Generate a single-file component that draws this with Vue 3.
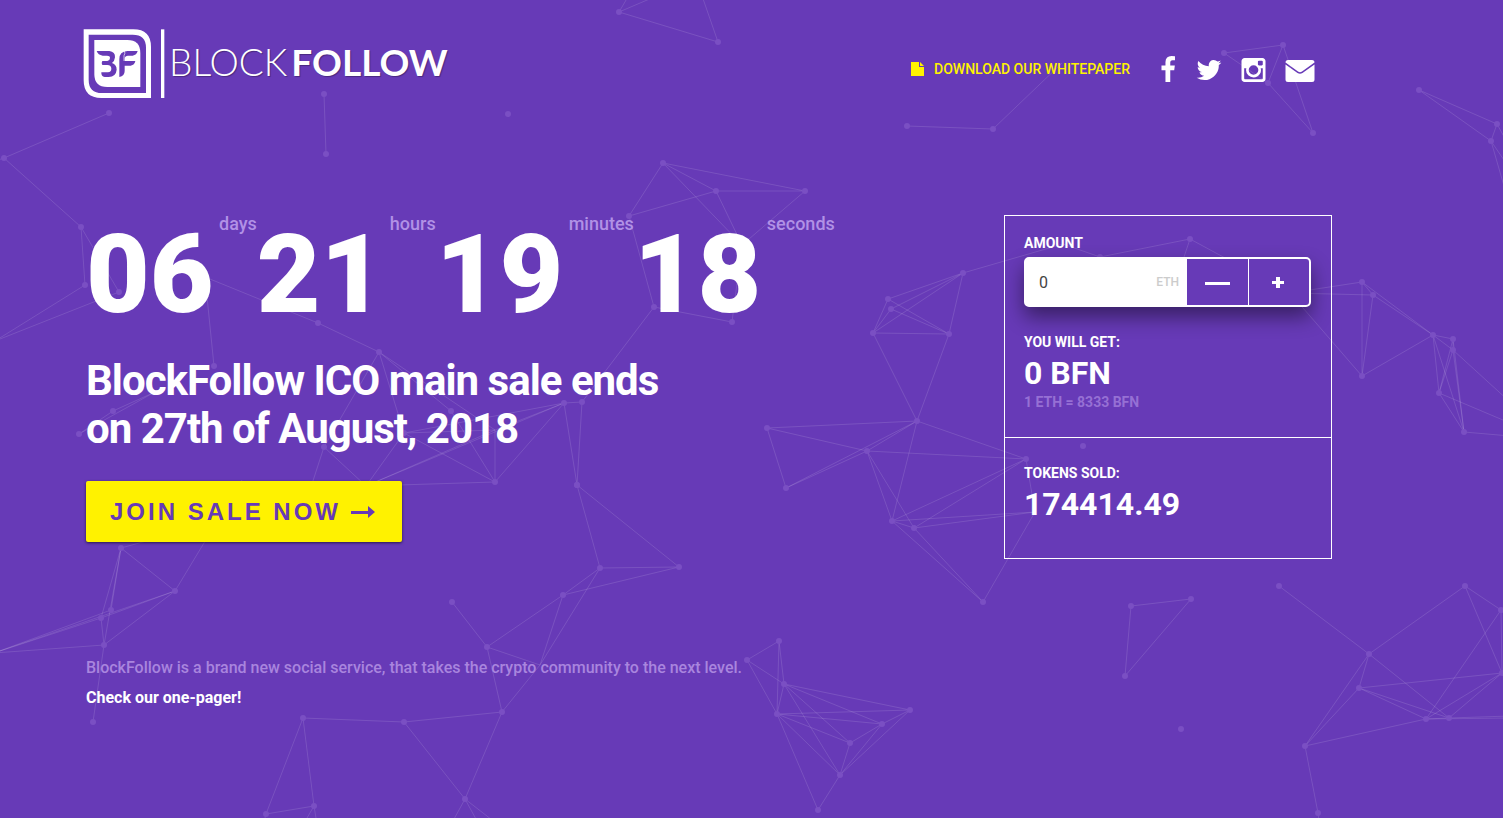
<script setup>
import { computed, ref } from 'vue'

const RATE = 8333
const amount = ref(0)
const tokens = computed(() => Math.round((Number(amount.value) || 0) * RATE))

function step(by) {
  amount.value = Math.max(0, (Number(amount.value) || 0) + by)
}

const countdown = [
  { value: '06', unit: 'days' },
  { value: '21', unit: 'hours' },
  { value: '19', unit: 'minutes' },
  { value: '18', unit: 'seconds' },
]

// Each cluster of the background web: points, and the links between them by index.
// Points listed after `dots` only anchor lines and are not drawn.
const clusters = [
  {
    dots: 5,
    points: [[109, 113], [4, 158], [81, 227], [85, 285], [119, 292], [-5, 341], [-8, 162]],
    links: [[0, 1], [1, 2], [1, 6], [2, 3], [2, 4], [3, 5], [4, 5]],
  },
  { dots: 2, points: [[324, 94], [326, 154]], links: [[0, 1]] },
  { dots: 2, points: [[619, 12], [718, 42], [632, -10], [700, -10], [680, -14]], links: [[0, 1], [0, 2], [1, 3], [0, 4]] },
  { dots: 1, points: [[508, 114]], links: [] },
  { dots: 1, points: [[1083, 446]], links: [] },
  { dots: 1, points: [[1181, 729]], links: [] },
  {
    dots: 14,
    points: [
      [205, 277], [318, 323], [379, 352], [214, 366], [113, 411], [79, 434], [324, 447],
      [404, 433], [451, 411], [564, 403], [582, 402], [495, 482], [577, 485], [366, 486],
      [495, 430], [310, 490], [155, 392], [654, 307],
    ],
    links: [
      [0, 1], [0, 3], [1, 2], [2, 6], [2, 7], [2, 8], [2, 14], [4, 5], [4, 16], [5, 16], [6, 13], [6, 15],
      [7, 9], [7, 11], [7, 13], [7, 14], [8, 11], [9, 10], [9, 11], [9, 12], [9, 13], [9, 14],
      [10, 12], [10, 17], [11, 13], [11, 14], [13, 14],
    ],
  },
  {
    dots: 6,
    points: [[121, 548], [175, 591], [111, 610], [101, 618], [104, 645], [93, 722], [210, 543], [175, 533], [-6, 653], [242, 480]],
    links: [[0, 1], [0, 3], [0, 4], [0, 7], [1, 9], [1, 3], [1, 4], [1, 8], [2, 8], [2, 0], [3, 4], [3, 8], [4, 8], [4, 5]],
  },
  {
    dots: 12,
    points: [
      [452, 602], [487, 647], [563, 595], [600, 568], [679, 567], [577, 485], [502, 712], [404, 722],
      [303, 718], [314, 806], [266, 814], [465, 799], [540, 665], [448, 830], [482, 830], [505, 830],
      [300, 830], [318, 830], [262, 830],
    ],
    links: [
      [0, 1], [1, 2], [1, 6], [1, 12], [2, 3], [2, 4], [2, 12], [3, 4], [3, 5], [3, 12], [4, 5], [6, 12],
      [6, 7], [6, 11], [7, 8], [7, 11], [8, 9], [8, 10], [9, 10], [11, 13], [11, 14], [11, 15], [9, 16], [9, 17], [10, 18],
    ],
  },
  {
    dots: 6,
    points: [[663, 163], [716, 191], [805, 191], [629, 216], [654, 307], [732, 322], [742, 245]],
    links: [[0, 1], [0, 2], [0, 3], [0, 6], [1, 2], [1, 3], [1, 6], [2, 6], [3, 4], [4, 5], [5, 6]],
  },
  {
    dots: 13,
    points: [
      [888, 299], [891, 309], [873, 333], [949, 334], [963, 273], [917, 421], [767, 428], [867, 451],
      [786, 488], [1026, 459], [892, 521], [914, 528], [983, 602], [1035, 512], [1063, 244],
    ],
    links: [
      [0, 2], [0, 3], [0, 4], [1, 2], [1, 3], [1, 4], [2, 3], [2, 4], [3, 4], [2, 5], [3, 5], [4, 14],
      [5, 6], [5, 7], [5, 8], [5, 9], [5, 10], [6, 7], [6, 8], [7, 8], [7, 9], [7, 10], [7, 11],
      [9, 10], [9, 11], [9, 13], [10, 11], [10, 12], [10, 13], [11, 12], [11, 13], [12, 13],
    ],
  },
  {
    dots: 10,
    points: [
      [1190, 239], [1100, 257], [1362, 282], [1373, 295], [1362, 376], [1433, 335], [1453, 339], [1453, 350],
      [1439, 393], [1464, 432], [1290, 293], [1183, 260], [1510, 402], [1510, 423], [1510, 436], [1063, 244],
    ],
    links: [
      [0, 1], [0, 10], [0, 11], [1, 15], [2, 3], [2, 4], [2, 5], [2, 10], [3, 4], [3, 5], [3, 10], [4, 5], [4, 10],
      [5, 6], [5, 7], [5, 8], [5, 9], [6, 7], [6, 8], [6, 9], [7, 8], [7, 9], [7, 12], [8, 9], [8, 13], [9, 14],
    ],
  },
  {
    dots: 3,
    points: [[1419, 90], [1497, 124], [1491, 141], [1508, 144], [1508, 166], [1508, 200]],
    links: [[0, 1], [0, 2], [1, 2], [1, 3], [2, 4], [2, 5]],
  },
  {
    dots: 4,
    points: [[1224, 53], [1283, 45], [1268, 83], [1313, 133]],
    links: [[0, 1], [0, 2], [1, 2], [1, 3], [2, 3]],
  },
  { dots: 2, points: [[907, 126], [993, 129], [1062, 63]], links: [[0, 1], [1, 2]] },
  { dots: 3, points: [[1131, 606], [1191, 599], [1125, 676]], links: [[0, 1], [0, 2], [1, 2]] },
  {
    dots: 9,
    points: [[779, 641], [747, 660], [784, 684], [777, 714], [910, 710], [882, 724], [850, 743], [840, 775], [818, 810]],
    links: [
      [0, 1], [0, 2], [0, 3], [1, 2], [1, 3], [2, 3], [2, 4], [2, 5], [2, 6], [2, 7], [3, 4], [3, 5], [3, 6],
      [3, 7], [3, 8], [4, 5], [4, 7], [5, 6], [5, 7], [6, 7], [7, 8],
    ],
  },
  {
    dots: 10,
    points: [
      [1279, 586], [1465, 586], [1369, 654], [1359, 688], [1426, 719], [1449, 718], [1305, 746], [1318, 813],
      [1501, 610], [1502, 673], [1510, 716], [1510, 718], [1320, 830],
    ],
    links: [
      [0, 2], [1, 2], [1, 8], [1, 9], [2, 3], [2, 5], [2, 6], [3, 4], [3, 5], [3, 6], [3, 9], [4, 5], [4, 6],
      [4, 8], [4, 9], [4, 11], [5, 9], [5, 10], [6, 7], [7, 12], [8, 9],
    ],
  },
]
</script>

<template>
  <div class="page">
    <svg class="web" viewBox="0 0 1503 818" preserveAspectRatio="xMidYMid slice" aria-hidden="true">
      <g v-for="(c, i) in clusters" :key="i">
        <line
          v-for="([a, b], j) in c.links"
          :key="j"
          :x1="c.points[a][0]"
          :y1="c.points[a][1]"
          :x2="c.points[b][0]"
          :y2="c.points[b][1]"
        />
        <circle v-for="(p, j) in c.points.slice(0, c.dots)" :key="j" :cx="p[0]" :cy="p[1]" r="3" />
      </g>
    </svg>

    <header class="header">
      <a class="logo" href="#" aria-label="BlockFollow">
        <svg class="mark" viewBox="39 42 246 207" aria-hidden="true">
          <path fill="#fff" fill-rule="evenodd" d="M41 43H190Q243 43 243 96V249H94Q41 249 41 196ZM56 59V194Q56 234 96 234H228V98Q228 59 188 59Z" />
          <path fill="#fff" d="M73 75H172Q211 75 211 114V216H112Q73 216 73 177Z" />
          <path fill="#673ab7" d="M80 108H118Q136 110 135 127Q134 138 126 144Q140 149 140 164Q138 185 116 186H104Q93 184 94 172H114Q124 171 124 161Q124 151 112 150H97Q93 144 97 138H112Q120 136 120 129Q120 122 111 122H98Q84 120 80 108Z" />
          <path fill="#673ab7" d="M203 108H172Q148 110 148 132V186Q164 183 164 168V152H182Q194 150 196 138H164V130Q165 122 174 122H188Q200 120 203 108Z" />
          <path fill="none" stroke="#fff" stroke-width="2" d="M163 108Q167 114 162 122V138" />
          <path fill="#fff" d="M273 43H283V249H273Z" />
        </svg>
        <span class="wordmark"><span class="thin">BLOCK</span><span class="thick">FOLLOW</span></span>
      </a>

      <nav class="nav">
        <a class="paper" href="#">
          <svg viewBox="0 0 13 14" aria-hidden="true"><path d="M0 0H8V5H13V14H0ZM9 0L13 4H9Z" /></svg>
          <span>DOWNLOAD OUR WHITEPAPER</span>
        </a>
        <a class="social" href="#" aria-label="Facebook">
          <svg width="16" height="28" viewBox="448 0 1024 1792"><path d="M1343 12v264h-157q-86 0-116 36t-30 108v189h293l-39 296h-254v759h-306v-759h-255v-296h255v-218q0-186 104-288.500t277-102.500q147 0 228 12z" /></svg>
        </a>
        <a class="social" href="#" aria-label="Twitter">
          <svg width="26" height="28" viewBox="64 0 1664 1792"><path d="M1684 408q-67 98-162 167 1 14 1 42 0 130-38 259.500t-115.500 248.500-184.500 210.500-258 146-323 54.500q-271 0-496-145 35 4 78 4 225 0 401-138-105-2-188-64.500t-114-159.500q33 5 61 5 43 0 85-11-112-23-185.500-111.500t-73.500-205.500v-4q68 38 146 41-66-44-105-115t-39-154q0-88 44-163 121 149 294.500 238.500t371.500 99.500q-8-38-8-74 0-134 94.500-228.500t228.500-94.500q140 0 236 102 109-21 205-78-37 115-142 178 93-10 186-50z" /></svg>
        </a>
        <a class="social" href="#" aria-label="Instagram">
          <svg width="25" height="28" viewBox="96 0 1600 1792"><path fill-rule="evenodd" d="M1490 1426v-648h-135q20 63 20 131 0 126-64 232.500t-174 168.500-240 62q-197 0-337-135.500t-140-327.500q0-68 20-131h-141v648q0 26 17.500 43.500t43.500 17.500h1069q25 0 43-17.500t18-43.500zm-284-533q0-124-90.500-211.500t-218.500-87.500q-127 0-217.500 87.500t-90.500 211.500 90.500 211.500 217.500 87.500q128 0 218.500-87.500t90.500-211.500zm284-360v-165q0-28-20-48.500t-49-20.500h-174q-29 0-49 20.500t-20 48.500v165q0 29 20 49t49 20h174q29 0 49-20t20-49zm174-208v1142q0 81-58 139t-139 58h-1142q-81 0-139-58t-58-139v-1142q0-81 58-139t139-58h1142q81 0 139 58t58 139z" /></svg>
        </a>
        <a class="social" href="#" aria-label="Email">
          <svg width="30" height="28" viewBox="0 0 30 28"><path d="M3 4H27Q29.500 4 29.500 6.500L17 15.500Q15 17 13 15.500L.5 6.500Q.5 4 3 4ZM.5 8.500L12.500 17Q15 18.500 17.500 17L29.500 8.500V23.500Q29.500 26 27 26H3Q.5 26 .5 23.500Z" /></svg>
        </a>
      </nav>
    </header>

    <main class="main">
      <section class="intro">
        <div class="countdown">
          <div v-for="part in countdown" :key="part.unit" class="part">
            <span class="value">{{ part.value }}</span><span class="unit">{{ part.unit }}</span>
          </div>
        </div>
        <h1>BlockFollow ICO main sale ends<br />on 27th of August, 2018</h1>
        <button class="join" type="button">
          <span>JOIN SALE NOW</span>
          <svg width="24" height="12" viewBox="0 0 24 12" aria-hidden="true"><path d="M0 5H17V0L24 6L17 12V8H0Z" /></svg>
        </button>
        <p class="lead">BlockFollow is a brand new social service, that takes the crypto community to the next level.</p>
        <a class="pager" href="#">Check our one-pager!</a>
      </section>

      <aside class="card">
        <div class="box calc">
          <label class="caption" for="amount">AMOUNT</label>
          <div class="field">
            <div class="entry">
              <input id="amount" v-model="amount" type="text" inputmode="numeric" />
              <span class="currency">ETH</span>
            </div>
            <button type="button" aria-label="Decrease" @click="step(-1)">
              <svg width="26" height="14" viewBox="0 0 26 14"><path d="M0 7H25V10H0Z" /></svg>
            </button>
            <button type="button" aria-label="Increase" @click="step(1)">
              <svg width="14" height="14" viewBox="0 0 14 14"><path d="M4 2H8V6H12V9H8V13H4V9H0V6H4Z" /></svg>
            </button>
          </div>
          <div class="caption">YOU WILL GET:</div>
          <div class="total">{{ tokens }} BFN</div>
          <div class="rate">1 ETH = {{ RATE }} BFN</div>
        </div>
        <div class="box sold">
          <div class="caption">TOKENS SOLD:</div>
          <div class="total">174414.49</div>
        </div>
      </aside>
    </main>
  </div>
</template>

<style>
html,
body {
  margin: 0;
  background: #673ab7;
}
</style>

<style scoped>
.page {
  position: relative;
  min-height: 100vh;
  box-sizing: border-box;
  overflow: hidden;
  padding: 0 171px 0 86px;
  background: #673ab7;
  color: #fff;
  font-family: Roboto, 'Open Sans', sans-serif;
}
a {
  color: inherit;
  text-decoration: none;
}
.web {
  position: absolute;
  inset: 0;
  width: 100%;
  height: 100%;
}
.web line {
  stroke: #fff;
  stroke-opacity: 0.12;
  stroke-width: 1;
}
.web circle {
  fill: #7a4fc3;
}
.header,
.main {
  position: relative;
  display: flex;
  justify-content: space-between;
}
.header {
  align-items: center;
  padding-top: 29px;
  padding-right: 17px;
}
.logo {
  display: flex;
  align-items: center;
  gap: 4px;
  margin-left: -3px;
}
.mark {
  width: 82px;
  height: 69px;
}
.wordmark {
  display: flex;
  gap: 4px;
  padding-bottom: 4px;
  font-family: Lato, sans-serif;
  font-size: 37px;
  line-height: 40px;
  text-shadow: 1px 1px 1px rgba(0, 0, 0, 0.3);
}
.thin {
  font-weight: 300;
}
.thick {
  font-weight: 700;
}
.nav {
  display: flex;
  align-items: center;
  gap: 19px;
  padding-top: 12px;
}
.nav svg {
  display: block;
  fill: #fff;
}
.paper {
  display: flex;
  align-items: center;
  gap: 10px;
  margin-right: 12px;
  padding-bottom: 2px;
  color: #fff200;
  font-size: 14px;
  font-weight: 500;
  line-height: 20px;
}
.nav .paper svg {
  width: 13px;
  height: 14px;
  fill: #fff200;
}
.main {
  align-items: flex-start;
  padding-top: 117px;
}
.countdown {
  display: flex;
  height: 116px;
}
.part {
  display: flex;
  align-items: flex-start;
}
.value {
  min-width: 133px;
  font-size: 110px;
  font-weight: 900;
  line-height: 120px;
}
.unit {
  font-size: 18px;
  font-weight: 500;
  line-height: 18px;
  color: #b191e6;
}
h1 {
  margin: 26px 0 28px;
  font-size: 42px;
  font-weight: 700;
  line-height: 48px;
  letter-spacing: -1px;
}
.join {
  display: flex;
  align-items: center;
  gap: 10px;
  height: 61px;
  padding: 0 27px 0 24px;
  border: 0;
  border-radius: 2px;
  background: #fff200;
  box-shadow: 0 1px 3px rgba(0, 0, 0, 0.6);
  color: #673ab7;
  font-family: 'Liberation Sans', Arial, sans-serif;
  font-size: 24px;
  font-weight: 700;
  letter-spacing: 3px;
}
.join svg {
  fill: #673ab7;
}
.lead {
  margin: 114px 0 6px;
  font-size: 16px;
  font-weight: 500;
  line-height: 24px;
  color: #a985de;
}
.pager {
  font-size: 16px;
  font-weight: 700;
  line-height: 24px;
}
.card {
  width: 328px;
  box-sizing: border-box;
  border: 1px solid #fff;
}
.box {
  padding: 0 20px 0 19px;
}
.calc {
  padding-top: 18px;
  padding-bottom: 27px;
  border-bottom: 1px solid #fff;
}
.sold {
  padding-top: 26px;
  padding-bottom: 33px;
}
.caption {
  display: block;
  font-size: 14px;
  font-weight: 700;
  line-height: 19px;
}
.field {
  display: flex;
  height: 50px;
  box-sizing: border-box;
  margin: 4px 0 26px;
  border: 2px solid #fff;
  border-radius: 5px;
  background: #673ab7;
  box-shadow: 0 10px 20px rgba(0, 0, 0, 0.45);
}
.entry {
  display: flex;
  flex: 1;
  align-items: center;
  min-width: 0;
  padding-right: 8px;
  background: #fff;
}
.entry input {
  flex: 1;
  min-width: 0;
  padding: 0 0 0 13px;
  border: 0;
  outline: 0;
  background: none;
  color: #444;
  font-family: inherit;
  font-size: 16px;
}
.currency {
  color: #ccc;
  font-size: 12px;
  font-weight: 500;
}
.field button {
  display: flex;
  align-items: center;
  justify-content: center;
  width: 61px;
  padding: 0;
  border: 0;
  background: none;
}
.field button + button {
  border-left: 1px solid #fff;
}
.field button svg {
  fill: #fff;
}
.total {
  font-size: 32px;
  font-weight: 700;
  line-height: 42px;
}
.rate {
  font-size: 14px;
  font-weight: 700;
  line-height: 16px;
  color: #9670d4;
}
</style>
